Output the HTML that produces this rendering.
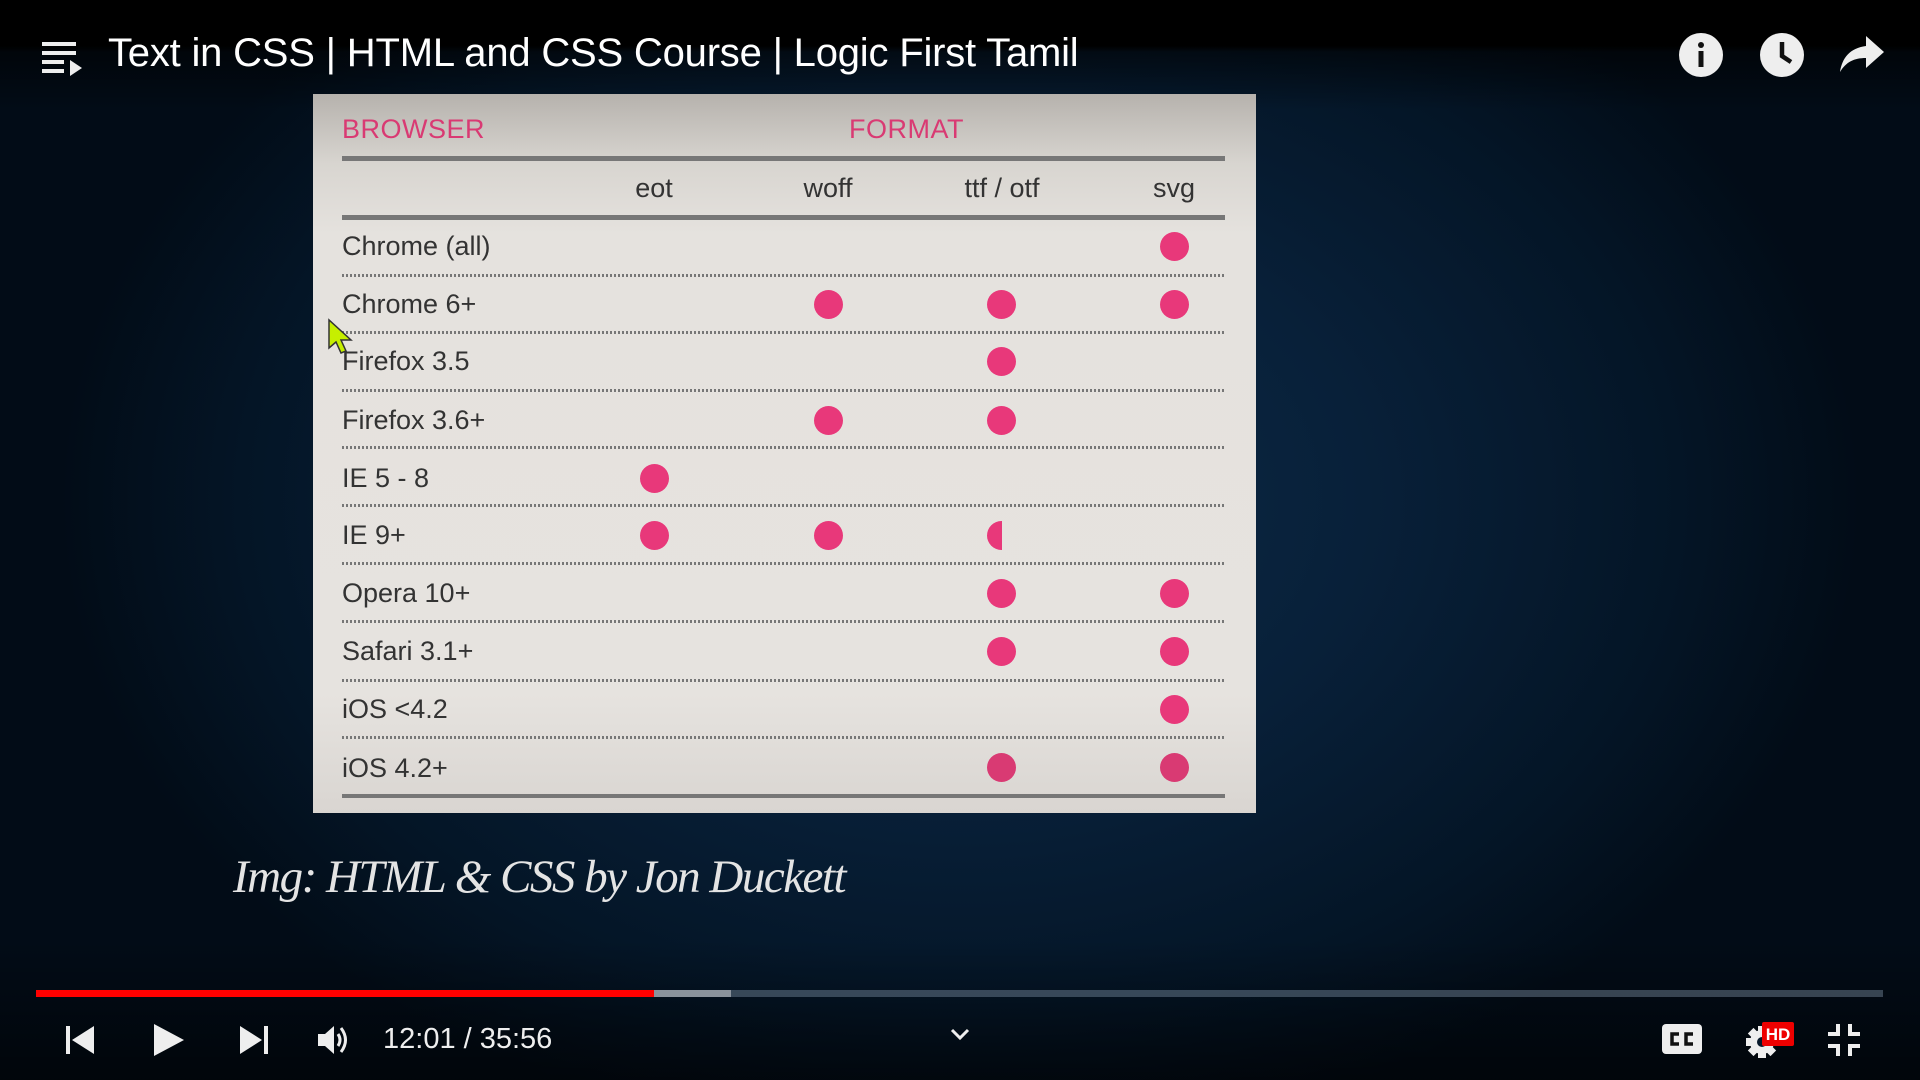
<!DOCTYPE html>
<html><head><meta charset="utf-8"><style>
*{margin:0;padding:0;box-sizing:border-box}
body{width:1920px;height:1080px;overflow:hidden;position:relative;font-family:"Liberation Sans",sans-serif;
background:radial-gradient(ellipse 900px 650px at 960px 500px,#0d2c48 0%,#082039 45%,#041526 80%,#020c17 100%);}
.top{position:absolute;left:0;top:0;width:1920px;height:110px;background:linear-gradient(#000 0,#000 46px,rgba(0,0,0,.55) 52px,rgba(0,0,0,0) 110px)}
.title{position:absolute;left:108px;top:31px;color:#fff;font-size:40px;white-space:nowrap;letter-spacing:-.2px}
.bot{position:absolute;left:0;bottom:0;width:1920px;height:140px;background:linear-gradient(rgba(0,0,0,0),rgba(0,0,0,.55))}
.panel{position:absolute;left:313px;top:94px;width:943px;height:719px;background:linear-gradient(#b6b2ad 0,#d8d5d0 70px,#e5e2de 140px,#e6e3df 600px,#d9d5d1 719px)}
.p{position:absolute;color:#333;font-size:27px;white-space:nowrap}
.h{color:#d93a73;font-size:27px;letter-spacing:.5px}
.thick{position:absolute;left:342px;width:883px;height:5px;background:#777}
.dot{position:absolute;left:342px;width:883px;height:3px;background:repeating-linear-gradient(90deg,#777 0 2px,transparent 2px 4px)}
.d{position:absolute;width:29px;height:29px;border-radius:50%;background:#e8387a}
.cap{position:absolute;left:233px;top:850px;color:#e4e4e4;font-family:"Liberation Serif",serif;font-style:italic;font-size:47px;white-space:nowrap;letter-spacing:-1.5px}
.prog{position:absolute;top:990px;height:7px}
.time{position:absolute;left:383px;top:1023px;color:#eee;font-size:29px}
</style></head><body>
<div class="top"></div>
<svg style="position:absolute;left:40px;top:40px" width="44" height="40" viewBox="0 0 44 40"><g fill="#eee"><rect x="2" y="2" width="34" height="4"/><rect x="2" y="11" width="34" height="4"/><rect x="2" y="20" width="22" height="4"/><rect x="2" y="29" width="22" height="4"/><path d="M30 20 L42 28 L30 36 Z"/></g></svg>
<div class="title">Text in CSS | HTML and CSS Course | Logic First Tamil</div>
<svg style="position:absolute;left:1678px;top:32px" width="46" height="46" viewBox="0 0 46 46"><circle cx="23" cy="23" r="22" fill="#eee"/><circle cx="23" cy="13" r="3" fill="#111"/><rect x="20.5" y="19" width="5" height="16" fill="#111"/></svg>
<svg style="position:absolute;left:1759px;top:32px" width="46" height="46" viewBox="0 0 46 46"><circle cx="23" cy="23" r="22" fill="#eee"/><path d="M23 10 V24 L32 30" stroke="#111" stroke-width="4.5" fill="none"/></svg>
<svg style="position:absolute;left:1838px;top:34px" width="48" height="40" viewBox="0 0 48 40"><path d="M28 2 L46 18 L28 34 V24 C16 24 8 28 2 38 C4 24 12 14 28 12 Z" fill="#eee"/></svg>

<div class="panel"></div>
<div class="p h" style="left:342px;top:114px">BROWSER</div>
<div class="p h" style="left:849px;top:114px">FORMAT</div>
<div class="thick" style="top:156px"></div>
<div class="p" style="left:654px;top:173px;transform:translateX(-50%)">eot</div>
<div class="p" style="left:828px;top:173px;transform:translateX(-50%)">woff</div>
<div class="p" style="left:1002px;top:173px;transform:translateX(-50%)">ttf / otf</div>
<div class="p" style="left:1174px;top:173px;transform:translateX(-50%)">svg</div>
<div class="thick" style="top:215px"></div>

<div class="p" style="left:342px;top:231px">Chrome (all)</div>
<div class="dot" style="top:274px"></div>
<div class="p" style="left:342px;top:289px">Chrome 6+</div>
<div class="dot" style="top:331px"></div>
<div class="p" style="left:342px;top:346px">Firefox 3.5</div>
<div class="dot" style="top:389px"></div>
<div class="p" style="left:342px;top:405px">Firefox 3.6+</div>
<div class="dot" style="top:446px"></div>
<div class="p" style="left:342px;top:463px">IE 5 - 8</div>
<div class="dot" style="top:504px"></div>
<div class="p" style="left:342px;top:520px">IE 9+</div>
<div class="dot" style="top:562px"></div>
<div class="p" style="left:342px;top:578px">Opera 10+</div>
<div class="dot" style="top:620px"></div>
<div class="p" style="left:342px;top:636px">Safari 3.1+</div>
<div class="dot" style="top:679px"></div>
<div class="p" style="left:342px;top:694px">iOS &lt;4.2</div>
<div class="dot" style="top:736px"></div>
<div class="p" style="left:342px;top:753px">iOS 4.2+</div>
<div class="thick" style="top:794px;height:4px"></div>

<div class="d" style="left:1160px;top:232px"></div>
<div class="d" style="left:814px;top:290px"></div><div class="d" style="left:987px;top:290px"></div><div class="d" style="left:1160px;top:290px"></div>
<div class="d" style="left:987px;top:347px"></div>
<div class="d" style="left:814px;top:406px"></div><div class="d" style="left:987px;top:406px"></div>
<div class="d" style="left:640px;top:464px"></div>
<div class="d" style="left:640px;top:521px"></div><div class="d" style="left:814px;top:521px"></div>
<div style="position:absolute;left:987px;top:521px;width:15px;height:29px;border-radius:15px 0 0 15px;background:#e8387a"></div>
<div class="d" style="left:987px;top:579px"></div><div class="d" style="left:1160px;top:579px"></div>
<div class="d" style="left:987px;top:637px"></div><div class="d" style="left:1160px;top:637px"></div>
<div class="d" style="left:1160px;top:695px"></div>
<div class="d" style="left:987px;top:753px;background:#d93a73"></div><div class="d" style="left:1160px;top:753px;background:#d93a73"></div>

<svg style="position:absolute;left:327px;top:318px" width="30" height="40" viewBox="0 0 30 40"><path d="M2 2 L2 30 L9 24 L14 35 L19 33 L14 22 L24 22 Z" fill="#c6ef00" stroke="#333" stroke-width="1.5"/></svg>

<div class="cap">Img: HTML &amp; CSS by Jon Duckett</div>

<div class="bot"></div>
<div class="prog" style="left:36px;width:1847px;background:rgba(120,140,160,.45)"></div>
<div class="prog" style="left:36px;width:695px;background:#8a939c"></div>
<div class="prog" style="left:36px;width:618px;background:#f00"></div>

<svg style="position:absolute;left:64px;top:1024px" width="32" height="32" viewBox="0 0 32 32"><rect x="2" y="2" width="4" height="28" fill="#eee"/><path d="M30 2 V30 L8 16 Z" fill="#eee"/></svg>
<svg style="position:absolute;left:152px;top:1022px" width="34" height="36" viewBox="0 0 34 36"><path d="M2 2 V34 L32 18 Z" fill="#eee"/></svg>
<svg style="position:absolute;left:238px;top:1024px" width="32" height="32" viewBox="0 0 32 32"><path d="M2 2 V30 L24 16 Z" fill="#eee"/><rect x="26" y="2" width="4" height="28" fill="#eee"/></svg>
<svg style="position:absolute;left:316px;top:1024px" width="36" height="32" viewBox="0 0 36 32"><path d="M2 10 H9 L18 2 V30 L9 22 H2 Z" fill="#eee"/><path d="M22 10 Q26 16 22 22" stroke="#eee" stroke-width="3" fill="none"/><path d="M25 4 Q34 16 25 28" stroke="#eee" stroke-width="3" fill="none"/></svg>
<div class="time">12:01 / 35:56</div>
<svg style="position:absolute;left:950px;top:1027px" width="20" height="14" viewBox="0 0 20 14"><path d="M2 3 L10 11 L18 3" stroke="#eee" stroke-width="3" fill="none"/></svg>

<svg style="position:absolute;left:1662px;top:1024px" width="40" height="30" viewBox="0 0 40 30"><rect x="0" y="0" width="40" height="30" rx="4" fill="#eee"/><path d="M17 10 H10 V20 H17 M31 10 H24 V20 H31" stroke="#111" stroke-width="3.5" fill="none"/></svg>
<svg style="position:absolute;left:1744px;top:1020px" width="52" height="40" viewBox="0 0 52 40"><circle cx="18" cy="22" r="12" fill="#eee"/><g fill="#eee"><rect x="14" y="6" width="8" height="32"/><rect x="2" y="18" width="32" height="8"/><rect x="14" y="6" width="8" height="32" transform="rotate(45 18 22)"/><rect x="14" y="6" width="8" height="32" transform="rotate(-45 18 22)"/></g><circle cx="18" cy="22" r="5" fill="#08192b"/><rect x="18" y="2" width="32" height="24" rx="2" fill="#e00"/><text x="34" y="20" font-family="Liberation Sans" font-weight="bold" font-size="17" fill="#fff" text-anchor="middle">HD</text></svg>
<svg style="position:absolute;left:1826px;top:1022px" width="36" height="36" viewBox="0 0 36 36"><path d="M12 2 V12 H2 M24 2 V12 H34 M12 34 V24 H2 M24 34 V24 H34" stroke="#eee" stroke-width="4" fill="none"/></svg>
</body></html>
